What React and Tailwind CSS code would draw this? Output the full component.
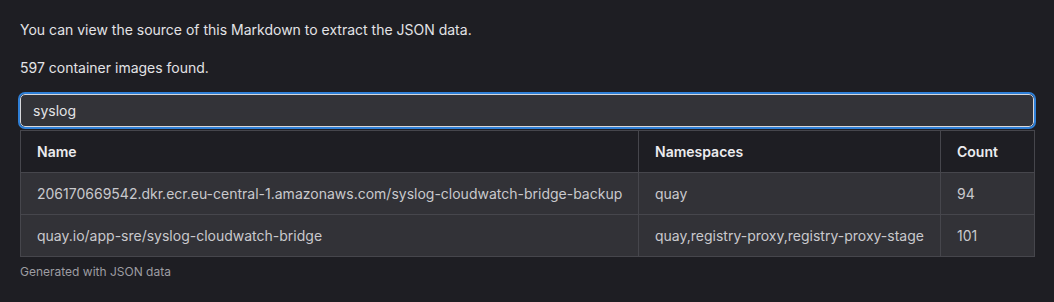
const rows = [
  {
    name: "206170669542.dkr.ecr.eu-central-1.amazonaws.com/syslog-cloudwatch-bridge-backup",
    namespaces: "quay",
    count: 94,
  },
  {
    name: "quay.io/app-sre/syslog-cloudwatch-bridge",
    namespaces: "quay,registry-proxy,registry-proxy-stage",
    count: 101,
  },
];

export default function App() {
  return (
    <div
      className="w-[1054px] h-[302px] bg-[#1e1e23] text-[#e3e3e6] px-5 pt-[19px] text-[14px] leading-[22px]"
      style={{ fontFamily: "Inter, 'Noto Sans', sans-serif" }}
    >
      <p>You can view the source of this Markdown to extract the JSON data.</p>
      <p className="mt-4">597 container images found.</p>

      <input
        className="mt-[15px] block w-full h-[33px] rounded-[5px] bg-[#333338] border border-[#d8d8dc] px-3 text-[14px] text-[#e3e3e6] outline-2 outline-[#2f7fd6] outline-offset-0"
        defaultValue="syslog"
      />

      <table className="mt-[3px] w-full border-collapse border border-[#46464c] table-fixed">
        <colgroup>
          <col className="w-[618px]" />
          <col className="w-[302px]" />
          <col className="w-[94px]" />
        </colgroup>
        <thead>
          <tr className="bg-[#1e1e23]">
            <th className="border border-[#46464c] px-4 h-[42px] text-left font-semibold text-[#ececef]">Name</th>
            <th className="border border-[#46464c] px-4 h-[42px] text-left font-semibold text-[#ececef]">Namespaces</th>
            <th className="border border-[#46464c] px-4 h-[42px] text-left font-semibold text-[#ececef]">Count</th>
          </tr>
        </thead>
        <tbody>
          {rows.map((r) => (
            <tr key={r.name} className="bg-[#323237]">
              <td className="border border-[#46464c] px-4 h-[42px] text-[#c9c9cd] whitespace-nowrap">{r.name}</td>
              <td className="border border-[#46464c] px-4 h-[42px] text-[#c9c9cd] whitespace-nowrap">{r.namespaces}</td>
              <td className="border border-[#46464c] px-4 h-[42px] text-[#c9c9cd]">{r.count}</td>
            </tr>
          ))}
        </tbody>
      </table>

      <p className="mt-[6px] text-[12px] leading-[18px] text-[#9d9da2]">Generated with JSON data</p>
    </div>
  );
}
